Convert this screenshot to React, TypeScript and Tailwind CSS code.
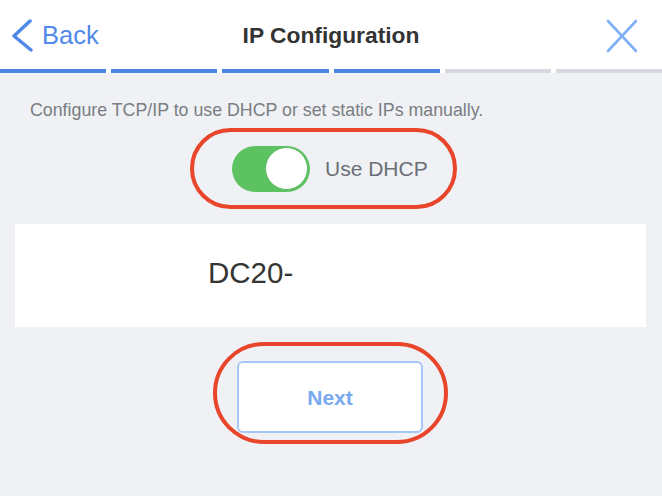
import React from "react";

const STEPS: number = 6;
const DONE: number = 4;

const App = () => {
  return (
    <div
      className="w-[662px] h-[496px] overflow-hidden bg-[#eff1f5]"
      style={{ fontFamily: '"Liberation Sans", Arial, sans-serif' }}
    >
      {/* header */}
      <div className="h-[69px] bg-white grid grid-cols-[1fr_auto_1fr] items-center pt-[2px]">
        <div className="flex items-center pl-[11px] text-[#5189e8]">
          <svg width="22" height="34" viewBox="0 0 22 34" fill="none">
            <polyline
              points="19,2 3,17 20,31"
              stroke="#4f88e8"
              strokeWidth="3.5"
              strokeLinecap="round"
              strokeLinejoin="round"
            />
          </svg>
          <span className="ml-[9px] text-[25.5px] leading-none">Back</span>
        </div>
        <div className="text-[22.8px] font-bold text-[#333] leading-none">IP Configuration</div>
        <div className="flex justify-end pr-[24px]">
          <svg width="32" height="34" viewBox="0 0 32 34" fill="none">
            <line x1="2" y1="2" x2="30" y2="32" stroke="#7db0f6" strokeWidth="2.6" strokeLinecap="round" />
            <line x1="30" y1="2" x2="2" y2="32" stroke="#7db0f6" strokeWidth="2.6" strokeLinecap="round" />
          </svg>
        </div>
      </div>

      {/* progress */}
      <div className="flex gap-[5px] h-[4px] bg-white">
        {Array.from({ length: STEPS }).map((_, index) => (
          <div
            key={index}
            className={`flex-1 h-full ${index < DONE ? "bg-[#4d86e2]" : "bg-[#d6d9dd]"}`}
          ></div>
        ))}
      </div>

      <p className="mt-[27px] pl-[30px] text-[17.8px] leading-[20px] text-[#7a7d82] whitespace-nowrap">
        Configure TCP/IP to use DHCP or set static IPs manually.
      </p>

      {/* dhcp toggle */}
      <div className="mt-[8px] ml-[190px] w-[267px] h-[81px] rounded-full border-4 border-[#e8452b] flex items-center pl-[38px]">
        <div className="w-[78px] h-[46px] rounded-full bg-[#5dc262] flex items-center justify-end pr-[2px]">
          <div className="w-[43px] h-[43px] rounded-full bg-white border border-[#58b95c]"></div>
        </div>
        <span className="ml-[15px] text-[21px] text-[#6b6f76] leading-none">Use DHCP</span>
      </div>

      {/* device card */}
      <div className="mt-[15px] mx-[15px] mr-[16px] h-[103px] bg-white flex items-center pl-[193px] pb-[6px]">
        <span className="text-[29.5px] leading-none text-[#353535]">DC20-</span>
      </div>

      {/* next */}
      <div className="mt-[15px] ml-[213px] w-[235px] h-[102px] rounded-full border-[4.5px] border-[#e8452b] flex items-start pl-[20px] pt-[15px]">
        <button className="w-[186px] h-[72px] rounded-[6px] border-2 border-[#a6c6f5] bg-white text-[21px] font-bold text-[#7aa9ef] pt-[2px]">
          Next
        </button>
      </div>
    </div>
  );
};

export default App;
